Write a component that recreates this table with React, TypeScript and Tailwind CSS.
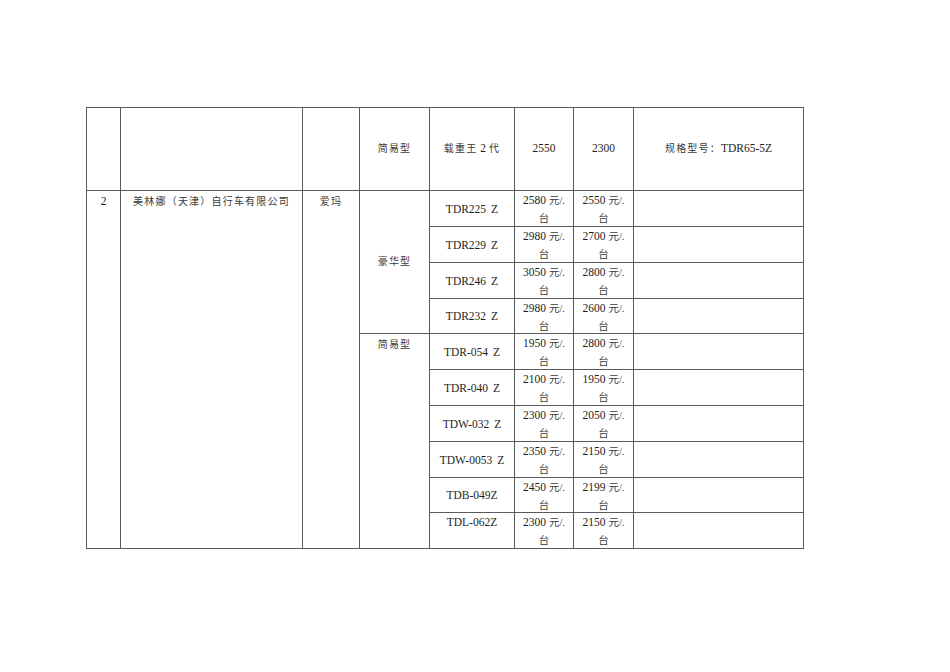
import React from 'react';

type PriceRow = {
  model: string;
  price1: string;
  price2: string;
  modelTop?: boolean;
};

const deluxe: PriceRow[] = [
  { model: 'TDR225 Z', price1: '2580', price2: '2550' },
  { model: 'TDR229 Z', price1: '2980', price2: '2700' },
  { model: 'TDR246 Z', price1: '3050', price2: '2800' },
  { model: 'TDR232 Z', price1: '2980', price2: '2600' },
];

const basic: PriceRow[] = [
  { model: 'TDR-054 Z', price1: '1950', price2: '2800' },
  { model: 'TDR-040 Z', price1: '2100', price2: '1950' },
  { model: 'TDW-032 Z', price1: '2300', price2: '2050' },
  { model: 'TDW-0053 Z', price1: '2350', price2: '2150' },
  { model: 'TDB-049Z', price1: '2450', price2: '2199' },
  { model: 'TDL-062Z', price1: '2300', price2: '2150', modelTop: true },
];

// content heights (row line pitch minus the 1px border)
const rowHeights = [35, 35, 35, 34, 35, 35, 35, 35, 34, 35];

const cell = 'border border-[#5a5a5a] p-0 text-center';
const cjk = 'tracking-[1.2px] text-[10px] text-[#3a3a3a]';

// price cell: "2580 元/." on first line, "台" below
const Price = ({ value, h }: { value: string; h: number }) => (
  <div className="leading-[18px] overflow-visible" style={{ height: h }}>
    <div>
      {value} <span className="text-[10.5px] text-[#3a3a3a]">元/.</span>
    </div>
    <div className="text-[10.5px] text-[#3a3a3a]">台</div>
  </div>
);

// model names: the space before a trailing "Z" is a bit wider in the source
const Model = ({ name }: { name: string }) => {
  const parts = name.split(' ');
  if (parts.length < 2) return <>{name}</>;
  return (
    <>
      {parts[0]}
      <span className="inline-block w-[5px]" />
      {parts[1]}
    </>
  );
};

export default function App() {
  const rows = [...deluxe, ...basic];

  return (
    <div
      className="w-[950px] h-[672px] bg-white text-[#1e1e1e]"
      style={{ fontFamily: '"Liberation Serif", "Noto Sans CJK SC", serif' }}
    >
      <div className="pt-[107px] pl-[86px]">
        <table className="table-fixed border-collapse text-[11.5px]" style={{ width: 717 }}>
          <colgroup>
            <col className="w-[34px]" />
            <col className="w-[182px]" />
            <col className="w-[57px]" />
            <col className="w-[70px]" />
            <col className="w-[85px]" />
            <col className="w-[59px]" />
            <col className="w-[60px]" />
            <col className="w-[170px]" />
          </colgroup>
          <tbody>
            {/* header row */}
            <tr className="h-[83px]">
              <td className={cell} />
              <td className={cell} />
              <td className={cell} />
              <td className={`${cell} align-middle`}>
                <span className={cjk}>简易型</span>
              </td>
              <td className={`${cell} align-middle`}>
                <span className={cjk}>载重王</span> 2 <span className={cjk}>代</span>
              </td>
              <td className={`${cell} align-middle`}>2550</td>
              <td className={`${cell} align-middle`}>2300</td>
              <td className={`${cell} align-middle`}>
                <span className={cjk}>规格型号：</span>TDR65-5Z
              </td>
            </tr>

            {rows.map((r, i) => (
              <tr key={r.model}>
                {i === 0 && (
                  <>
                    <td rowSpan={10} className={`${cell} align-top pt-[1px] leading-[18px]`}>
                      2
                    </td>
                    <td rowSpan={10} className={`${cell} align-top pt-[1px] leading-[18px]`}>
                      <span className={cjk}>美林娜（天津）自行车有限公司</span>
                    </td>
                    <td rowSpan={10} className={`${cell} align-top pt-[1px] leading-[18px]`}>
                      <span className={cjk}>爱玛</span>
                    </td>
                    <td rowSpan={4} className={`${cell} align-middle`}>
                      <span className={cjk}>豪华型</span>
                    </td>
                  </>
                )}
                {i === 4 && (
                  <td rowSpan={6} className={`${cell} align-top pt-[1px] leading-[18px]`}>
                    <span className={cjk}>简易型</span>
                  </td>
                )}
                <td
                  className={`${cell} ${r.modelTop ? 'align-top leading-[18px]' : 'align-middle leading-[16px]'}`}
                >
                  <Model name={r.model} />
                </td>
                <td className={`${cell} align-top`}>
                  <Price value={r.price1} h={rowHeights[i]} />
                </td>
                <td className={`${cell} align-top`}>
                  <Price value={r.price2} h={rowHeights[i]} />
                </td>
                <td className={cell} />
              </tr>
            ))}
          </tbody>
        </table>
      </div>
    </div>
  );
}
